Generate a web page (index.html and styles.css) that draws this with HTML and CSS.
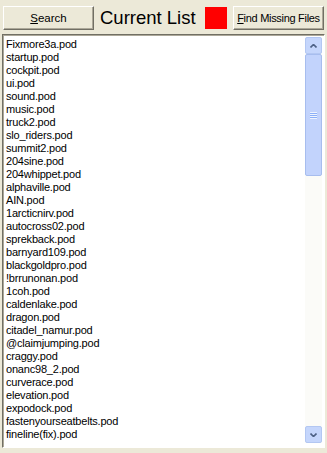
FILE: index.html
```html
<!DOCTYPE html>
<html lang="en">
<head>
    <meta charset="UTF-8">
    <title>Current List</title>
    <link rel="stylesheet" href="styles.css">
</head>
<body>
    <div class="toolbar">
        <button class="btn btn-search"><u>S</u>earch</button>
        <span class="title">Current List</span>
        <span class="status"></span>
        <button class="btn btn-find"><u>F</u>ind Missing Files</button>
    </div>
    <div class="listbox">
        <ul class="items">
            <li>Fixmore3a.pod</li>
            <li>startup.pod</li>
            <li>cockpit.pod</li>
            <li>ui.pod</li>
            <li>sound.pod</li>
            <li>music.pod</li>
            <li>truck2.pod</li>
            <li>slo_riders.pod</li>
            <li>summit2.pod</li>
            <li>204sine.pod</li>
            <li>204whippet.pod</li>
            <li>alphaville.pod</li>
            <li>AIN.pod</li>
            <li>1arcticnirv.pod</li>
            <li>autocross02.pod</li>
            <li>sprekback.pod</li>
            <li>barnyard109.pod</li>
            <li>blackgoldpro.pod</li>
            <li>!brrunonan.pod</li>
            <li>1coh.pod</li>
            <li>caldenlake.pod</li>
            <li>dragon.pod</li>
            <li>citadel_namur.pod</li>
            <li>@claimjumping.pod</li>
            <li>craggy.pod</li>
            <li>onanc98_2.pod</li>
            <li>curverace.pod</li>
            <li>elevation.pod</li>
            <li>expodock.pod</li>
            <li>fastenyourseatbelts.pod</li>
            <li>fineline(fix).pod</li>
        </ul>
        <div class="scrollbar">
            <div class="arrow arrow-up">
                <svg width="7" height="4" viewBox="0 0 7 4"><path d="M0.5 3.5 L3.5 0.5 L6.5 3.5" fill="none" stroke="#4d6185" stroke-width="1.6"/></svg>
            </div>
            <div class="track">
                <div class="thumb">
                    <span class="grip"></span>
                </div>
            </div>
            <div class="arrow arrow-down">
                <svg width="7" height="4" viewBox="0 0 7 4"><path d="M0.5 0.5 L3.5 3.5 L6.5 0.5" fill="none" stroke="#4d6185" stroke-width="1.6"/></svg>
            </div>
        </div>
    </div>
</body>
</html>
```

FILE: styles.css
```css
body {
    margin: 0;
    width: 327px;
    height: 453px;
    background-color: #ece9d8;
    font-family: "Liberation Sans", Arial, sans-serif;
    overflow: hidden;
}
.toolbar {
    display: flex;
    align-items: center;
    height: 24px;
    padding: 6px 3px 0 3px;
    white-space: nowrap;
}
.btn {
    flex-shrink: 0;
    height: 24px;
    background-color: #ece9d8;
    border: 1px solid;
    border-color: #ffffff #716f64 #716f64 #ffffff;
    box-shadow: inset -1px -1px 0 #aca899;
    font-family: "Liberation Sans", Arial, sans-serif;
    font-size: 11.5px;
    color: #000;
    padding: 0;
    white-space: nowrap;
}
.btn-search {
    width: 91px;
}
.btn-find {
    width: 91px;
    margin-left: auto;
    font-size: 11px;
    letter-spacing: -0.3px;
}
.title {
    flex-shrink: 0;
    font-size: 18.5px;
    margin-left: 6px;
}
.status {
    flex-shrink: 0;
    width: 22px;
    height: 22px;
    background-color: #ff0000;
    margin-left: 9px;
}
.listbox {
    display: flex;
    margin: 4px 2px 0 2px;
    height: 412px;
    background-color: #fff;
    border: 1px solid;
    border-color: #716f64 #ffffff #ffffff #716f64;
    box-shadow: inset 1px 1px 0 #aca899;
}
.items {
    flex: 1;
    list-style: none;
    margin: 0;
    padding: 3px 0 0 3px;
    font-size: 11px;
    letter-spacing: -0.2px;
    line-height: 13px;
    color: #000;
}
.scrollbar {
    display: flex;
    flex-direction: column;
    width: 17px;
    margin: 2px 2px 4px 0;
    background-color: #fbfbf8;
}
.arrow {
    display: flex;
    align-items: center;
    justify-content: center;
    height: 15px;
    background-color: #c5d6fc;
    border: 1px solid #b3c7f2;
    border-radius: 2px;
}
.track {
    flex: 1;
}
.thumb {
    display: flex;
    align-items: center;
    justify-content: center;
    height: 120px;
    background-color: #c2d3fc;
    border: 1px solid #a7bdee;
    border-radius: 2px;
}
.grip {
    width: 7px;
    height: 7px;
    background: repeating-linear-gradient(#eef4fe 0 1px, #8cb0f8 1px 2px);
}
```
